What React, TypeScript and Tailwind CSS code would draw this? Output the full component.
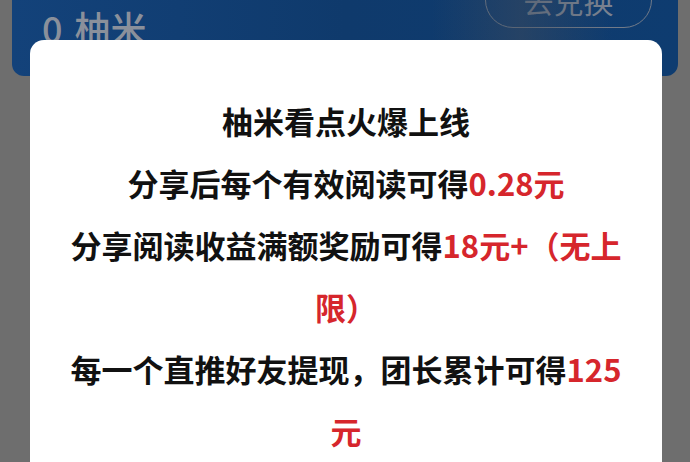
import React from "react";

const cjk = { fontFamily: '"Noto Sans CJK SC", "Noto Sans", sans-serif' };

function PointsCard() {
  return (
    <div className="mx-[12px] -mt-[40px] h-[116px] rounded-b-[12px] bg-gradient-to-r from-[#13427a] via-[#0f3a6c] to-[#0e3c70]">
      <div className="relative h-full overflow-hidden rounded-b-[12px]">
        <div className="flex h-full items-start justify-between pl-[30px] pr-[26px] pt-[12px]">
          <div className="mt-[37px] flex items-baseline gap-[12px] text-[36px] font-medium leading-[36px] text-[#8a909b]">
            <span>0</span>
            <span>柚米</span>
          </div>
          <button
            type="button"
            className="flex h-[56px] w-[167px] items-center justify-center rounded-full border-[1.5px] border-[#727b89] text-[30px] leading-none text-[#7b8391]"
          >
            去兑换
          </button>
        </div>
        <div className="pointer-events-none absolute inset-y-0 left-[420px] w-[180px] bg-gradient-to-r from-transparent via-[#3d4a5c]/50 to-transparent" />
      </div>
    </div>
  );
}

function Highlight({ children }: { children: React.ReactNode }) {
  return <span className="text-[#d6262c]">{children}</span>;
}

function NoticeModal() {
  const lines: React.ReactNode[] = [
    "柚米看点火爆上线",
    <>
      分享后每个有效阅读可得<Highlight>0.28元</Highlight>
    </>,
    <>
      分享阅读收益满额奖励可得<Highlight>18元+（无上限）</Highlight>
    </>,
    <>
      每一个直推好友提现，团长累计可得<Highlight>125元</Highlight>
    </>,
  ];

  return (
    <div className="absolute left-[30px] top-[40px] h-[460px] w-[632px] rounded-[14px] bg-white px-[28px] pt-[50px]">
      {lines.map((line, i) => (
        <p key={i} className="text-center text-[31px] font-bold leading-[62px] text-[#111111]">
          {line}
        </p>
      ))}
    </div>
  );
}

export default function App() {
  return (
    <div style={cjk} className="relative h-[462px] w-[690px] overflow-hidden bg-[#6e6e6e]">
      <PointsCard />
      <NoticeModal />
    </div>
  );
}
